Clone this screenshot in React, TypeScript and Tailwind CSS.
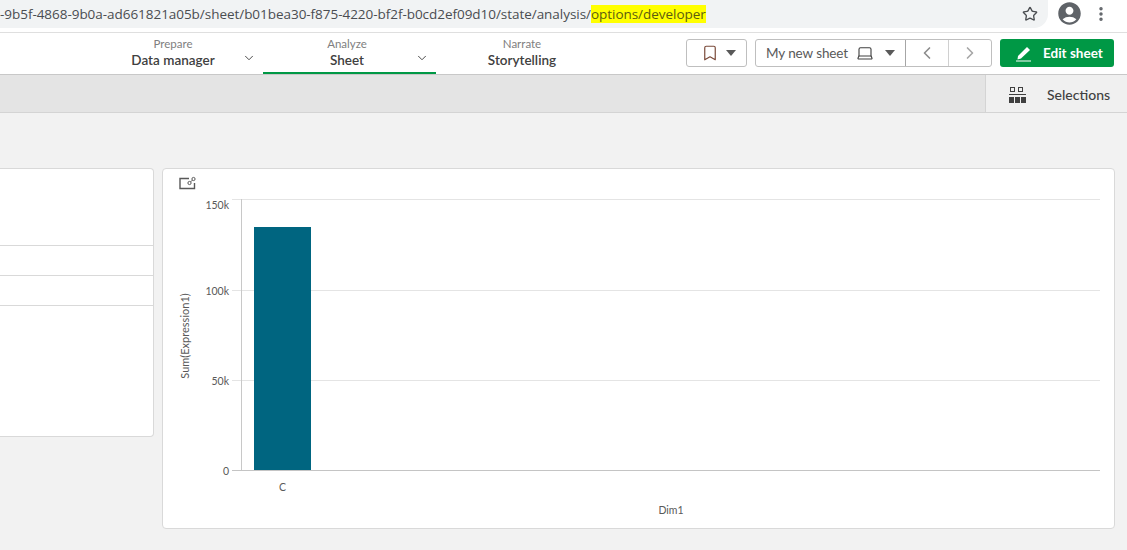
import { ChevronDown, ChevronLeft, ChevronRight, Star, Bookmark, Laptop, EllipsisVertical } from 'lucide-react'
import { MdAccountCircle } from 'react-icons/md'

const sans = "font-['Lato','Noto_Sans',sans-serif]"

function NavTab ({ label, value, width, active, chevron, shifted }: { label: string, value: string, width: string, active?: boolean, chevron?: boolean, shifted?: boolean }) {
  return (
    <div className={`relative flex h-full flex-col items-center pt-[4px] ${width} ${shifted ? 'pr-[5px]' : ''}`}>
      <span className="text-[11.5px] leading-[13px] text-[#808080]">{label}</span>
      <span className="mt-[1px] text-[13.5px] leading-[18px] font-semibold text-[#404040]">{value}</span>
      {chevron && <ChevronDown size={14} strokeWidth={1.6} className="absolute top-[18px] right-[7px] text-[#404040]" />}
      {active && <div className="absolute right-0 bottom-0 left-0 h-[2px] bg-[#009845]" />}
    </div>
  )
}

function CaretDown () {
  return <span className="h-0 w-0 border-x-[5px] border-t-[6px] border-x-transparent border-t-[#595959]" />
}

function Chart () {
  const grid = [
    { y: 30, label: '150k', dy: 10 },
    { y: 121, label: '100k', dy: 5 },
    { y: 211, label: '50k', dy: 5 },
    { y: 301, label: '0', dy: 5 }
  ]
  return (
    <svg width="950" height="358" className="block" fontFamily="Lato, sans-serif" fontSize="10.5" fill="#595959">
      {grid.map(g => (
        <g key={g.y}>
          <line x1="69" x2="937" y1={g.y + 0.5} y2={g.y + 0.5} stroke={g.y === 301 ? '#c4c4c4' : '#e4e4e4'} />
          <text x="66" y={g.y + g.dy} textAnchor="end">{g.label}</text>
        </g>
      ))}
      <line x1="78.5" x2="78.5" y1="30" y2="301" stroke="#c8c8c8" />
      <rect x="91" y="58" width="57" height="243" fill="#006580" />
      <text x="119.5" y="322" textAnchor="middle">C</text>
      <text x="508" y="345" textAnchor="middle">Dim1</text>
      <text x="26" y="167" fontSize="11" textAnchor="middle" transform="rotate(-90 26 167)">Sum(Expression1)</text>
    </svg>
  )
}

export default function App () {
  return (
    <div className={`flex h-[550px] w-[1127px] flex-col overflow-hidden bg-[#f2f2f2] ${sans}`}>
      {/* browser bar */}
      <div className="flex h-[33px] shrink-0 border-b border-[#dfdfdf] bg-white pb-[4px]">
        <div className="flex h-[28px] w-[1048px] items-center justify-between rounded-br-[14px] bg-[#f1f3f4] pr-[10px]">
          <div className="whitespace-nowrap font-['Open_Sans',sans-serif] text-[13.5px] leading-[18px] tracking-[-0.04px] text-[#4a4d51]">
            -9b5f-4868-9b0a-ad661821a05b/sheet/b01bea30-f875-4220-bf2f-b0cd2ef09d10/state/analysis/<span className="bg-[#ffff00] text-[#5c5c10]">options/developer</span>
          </div>
          <Star size={16} strokeWidth={2} className="text-[#4a4d51]" />
        </div>
        <MdAccountCircle size={27} className="ml-[8px] text-[#5f6368]" />
        <EllipsisVertical size={18} strokeWidth={2.6} className="mt-[5px] ml-[9px] text-[#5f6368]" />
      </div>

      {/* nav */}
      <div className="flex h-[42px] shrink-0 items-stretch border-b border-[#c8c8c8] bg-white">
        <div className="ml-[88px] flex">
          <NavTab label="Prepare" value="Data manager" width="w-[175px]" chevron shifted />
          <NavTab label="Analyze" value="Sheet" width="w-[173px]" active chevron shifted />
          <NavTab label="Narrate" value="Storytelling" width="w-[172px]" />
        </div>
        <div className="ml-[78px] flex items-center pb-[2px]">
          <button className="flex h-[28px] w-[61px] items-center justify-center gap-[7px] rounded-[3px] border border-[#bfbfbf] pl-[4px]">
            <Bookmark size={18} strokeWidth={1.6} className="text-[#7a4a3a]" />
            <CaretDown />
          </button>
          <div className="ml-[8px] flex h-[28px] w-[237px] rounded-[3px] border border-[#bfbfbf]">
            <div className="flex w-[150px] items-center border-r border-[#a6a6a6] pt-[2px] pl-[10px] text-[13.5px] tracking-[-0.1px] text-[#595959]">
              My new sheet
              <Laptop size={18} strokeWidth={1.5} className="mb-[2px] ml-[8px] text-[#404040]" />
              <span className="mb-[2px] ml-[11px] flex"><CaretDown /></span>
            </div>
            <div className="flex w-[43px] items-center justify-center border-r border-[#d0d0d0]">
              <ChevronLeft size={20} strokeWidth={2} className="text-[#8c8c8c]" />
            </div>
            <div className="flex flex-1 items-center justify-center">
              <ChevronRight size={20} strokeWidth={2} className="text-[#a6a6a6]" />
            </div>
          </div>
          <button className="ml-[8px] flex h-[28px] w-[114px] items-center rounded-[3px] bg-[#009845] pl-[15px] text-[13.5px] font-bold text-white">
            <svg width="17" height="18" viewBox="0 0 17 18" className="mr-[11px] shrink-0">
              <path d="M3 12 L12 3 L15 6 L6 14.5 L2.5 15.5 Z" fill="white" />
              <line x1="1" x2="16" y1="17" y2="17" stroke="white" />
            </svg>
            <span className="pt-[2px]">Edit sheet</span>
          </button>
        </div>
      </div>

      {/* toolbar */}
      <div className="flex h-[38px] shrink-0 justify-end border-b border-[#d4d4d4] bg-[#e4e4e4]">
        <div className="flex w-[142px] items-center border-l border-[#d4d4d4] bg-[#f0f0f0] pt-[2px] pl-[23px] text-[14px] font-medium text-[#404040]">
          <svg width="17" height="17" viewBox="0 0 17 17" className="mr-[21px] shrink-0" fill="#404040">
            <path d="M1 1h5v5H1zM2 2v3h3V2zM9 1h5v5H9zM10 2v3h3V2z" fillRule="evenodd" />
            <rect x="0" y="8" width="17" height="1" />
            <rect x="0" y="11" width="5" height="6" />
            <rect x="6" y="11" width="5" height="6" />
            <rect x="12" y="11" width="5" height="6" />
          </svg>
          Selections
        </div>
      </div>

      {/* sheet */}
      <div className="flex items-start pt-[55px]">
        <div className="flex h-[269px] w-[154px] flex-col rounded-r-[4px] border border-l-0 border-[#d9d9d9] bg-white pt-[76px]">
          <div className="h-[30px] border-t border-[#d9d9d9]" />
          <div className="h-[30px] border-t border-[#d9d9d9]" />
          <div className="border-t border-[#d9d9d9]" />
        </div>
        <div className="relative ml-[8px] h-[361px] w-[953px] rounded-[4px] border border-[#d9d9d9] bg-white">
          <svg width="17" height="14" viewBox="0 0 17 14" fill="none" stroke="#595959" className="absolute top-[7px] left-[16px]">
            <path d="M10 2.5H1V12.5H15.5V7" strokeWidth="1.4" />
            <circle cx="10.5" cy="7" r="1.6" strokeWidth="1" />
            <circle cx="14.5" cy="3" r="1.6" strokeWidth="1" />
            <line x1="11.6" y1="5.9" x2="13.4" y2="4.1" strokeWidth="1" />
          </svg>
          <Chart />
        </div>
      </div>
    </div>
  )
}
